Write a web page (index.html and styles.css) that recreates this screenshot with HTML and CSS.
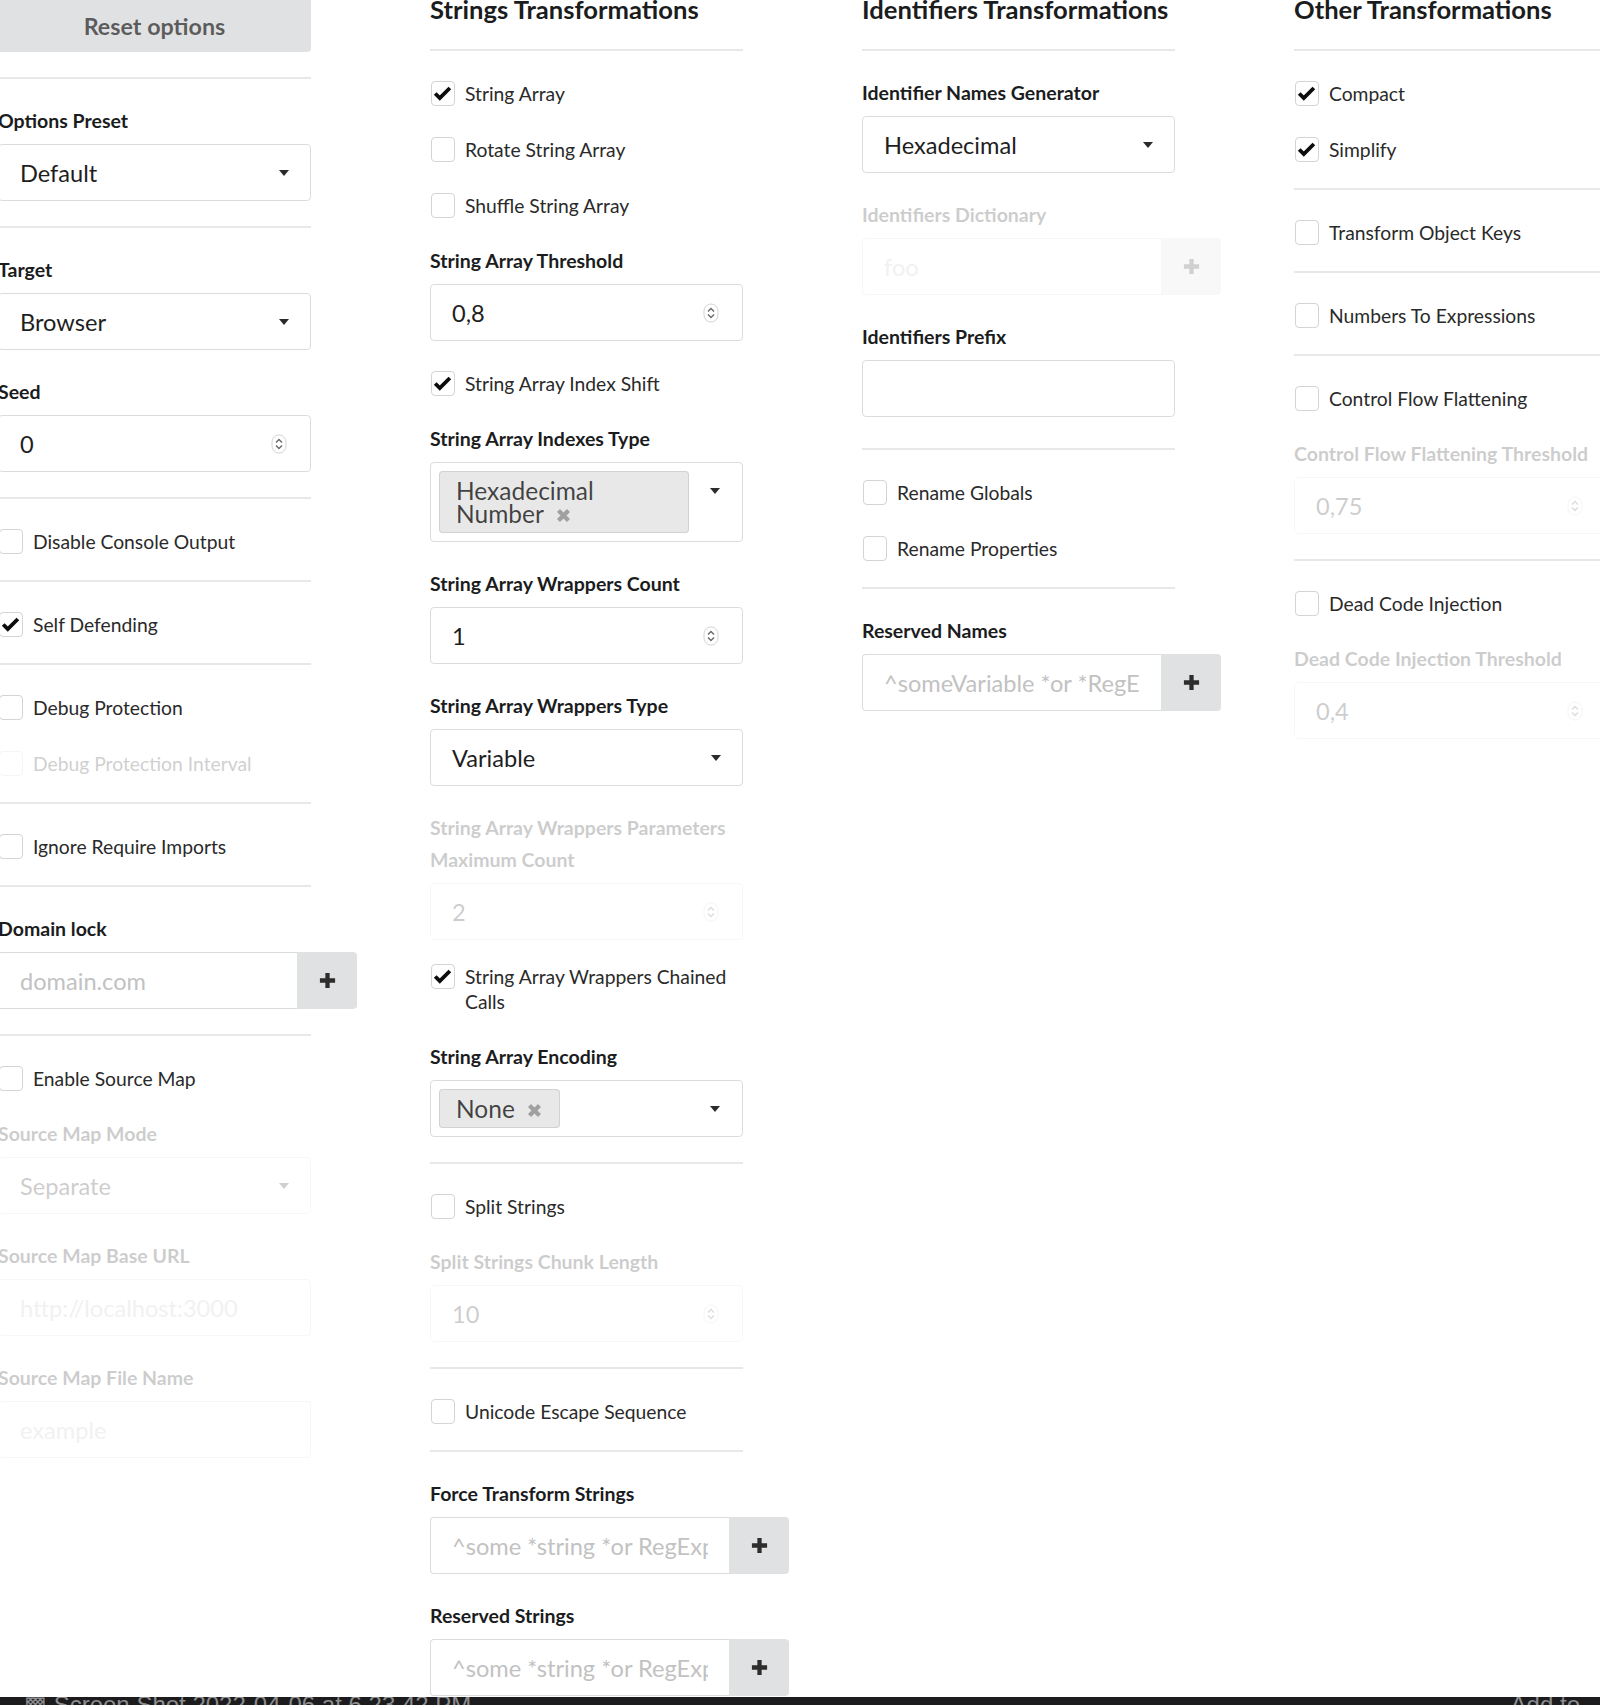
FILE: index.html
```html
<!DOCTYPE html>
<html lang="en">
<head>
    <meta charset="UTF-8">
    <meta name="viewport" content="width=device-width, initial-scale=1.0">
    <title>Obfuscator options</title>
    <link rel="stylesheet" href="styles.css">
</head>
<body>
    <div class="options">

        <!-- General -->
        <div class="options-column">
            <div class="segment">
                <button class="reset-button">Reset options</button>
            </div>
            <div class="segment">
                <div class="field">
                    <label class="field-label">Options Preset</label>
                    <div class="dropdown"><span>Default</span><i class="caret"></i></div>
                </div>
            </div>
            <div class="segment">
                <div class="field">
                    <label class="field-label">Target</label>
                    <div class="dropdown"><span>Browser</span><i class="caret"></i></div>
                </div>
                <div class="field">
                    <label class="field-label">Seed</label>
                    <div class="number-input">
                        <input type="text" value="0">
                        <svg class="spinner" viewBox="0 0 16 20"><rect x="1" y="1" width="14" height="18" rx="7"/><path d="M5 8.5l3-3 3 3M5 11.5l3 3 3-3"/></svg>
                    </div>
                </div>
            </div>
            <div class="segment">
                <label class="checkbox"><span class="box"></span>Disable Console Output</label>
            </div>
            <div class="segment">
                <label class="checkbox"><span class="box"><svg viewBox="0 0 24 24"><path d="M3.5 12l5 5L19.5 6"/></svg></span>Self Defending</label>
            </div>
            <div class="segment">
                <label class="checkbox"><span class="box"></span>Debug Protection</label>
                <label class="checkbox disabled"><span class="box"></span>Debug Protection Interval</label>
            </div>
            <div class="segment">
                <label class="checkbox"><span class="box"></span>Ignore Require Imports</label>
            </div>
            <div class="segment">
                <div class="field">
                    <label class="field-label">Domain lock</label>
                    <div class="action-input">
                        <input type="text" placeholder="domain.com">
                        <button class="add-button"><svg viewBox="0 0 20 20"><path d="M10 2v16M2 10h16"/></svg></button>
                    </div>
                </div>
            </div>
            <div class="segment">
                <label class="checkbox"><span class="box"></span>Enable Source Map</label>
                <div class="field disabled">
                    <label class="field-label">Source Map Mode</label>
                    <div class="dropdown"><span>Separate</span><i class="caret"></i></div>
                </div>
                <div class="field disabled">
                    <label class="field-label">Source Map Base URL</label>
                    <input class="text-input" type="text" placeholder="http://localhost:3000" disabled>
                </div>
                <div class="field disabled">
                    <label class="field-label">Source Map File Name</label>
                    <input class="text-input" type="text" placeholder="example" disabled>
                </div>
            </div>
        </div>

        <!-- Strings -->
        <div class="options-column">
            <div class="segment">
                <h3 class="column-title">Strings Transformations</h3>
            </div>
            <div class="segment">
                <label class="checkbox"><span class="box"><svg viewBox="0 0 24 24"><path d="M3.5 12l5 5L19.5 6"/></svg></span>String Array</label>
                <label class="checkbox"><span class="box"></span>Rotate String Array</label>
                <label class="checkbox"><span class="box"></span>Shuffle String Array</label>
                <div class="field">
                    <label class="field-label">String Array Threshold</label>
                    <div class="number-input">
                        <input type="text" value="0,8">
                        <svg class="spinner" viewBox="0 0 16 20"><rect x="1" y="1" width="14" height="18" rx="7"/><path d="M5 8.5l3-3 3 3M5 11.5l3 3 3-3"/></svg>
                    </div>
                </div>
                <label class="checkbox"><span class="box"><svg viewBox="0 0 24 24"><path d="M3.5 12l5 5L19.5 6"/></svg></span>String Array Index Shift</label>
                <div class="field">
                    <label class="field-label">String Array Indexes Type</label>
                    <div class="dropdown multiple">
                        <span class="tag">Hexadecimal Number<svg class="tag-delete" viewBox="0 0 12 12"><path d="M2 2l8 8M10 2l-8 8"/></svg></span>
                        <i class="caret"></i>
                    </div>
                </div>
                <div class="field">
                    <label class="field-label">String Array Wrappers Count</label>
                    <div class="number-input">
                        <input type="text" value="1">
                        <svg class="spinner" viewBox="0 0 16 20"><rect x="1" y="1" width="14" height="18" rx="7"/><path d="M5 8.5l3-3 3 3M5 11.5l3 3 3-3"/></svg>
                    </div>
                </div>
                <div class="field">
                    <label class="field-label">String Array Wrappers Type</label>
                    <div class="dropdown"><span>Variable</span><i class="caret"></i></div>
                </div>
                <div class="field disabled tight">
                    <label class="field-label">String Array Wrappers Parameters Maximum Count</label>
                    <div class="number-input">
                        <input type="text" value="2" disabled>
                        <svg class="spinner" viewBox="0 0 16 20"><rect x="1" y="1" width="14" height="18" rx="7"/><path d="M5 8.5l3-3 3 3M5 11.5l3 3 3-3"/></svg>
                    </div>
                </div>
                <label class="checkbox"><span class="box"><svg viewBox="0 0 24 24"><path d="M3.5 12l5 5L19.5 6"/></svg></span>String Array Wrappers Chained Calls</label>
                <div class="field">
                    <label class="field-label">String Array Encoding</label>
                    <div class="dropdown multiple">
                        <span class="tag">None<svg class="tag-delete" viewBox="0 0 12 12"><path d="M2 2l8 8M10 2l-8 8"/></svg></span>
                        <i class="caret"></i>
                    </div>
                </div>
            </div>
            <div class="segment">
                <label class="checkbox"><span class="box"></span>Split Strings</label>
                <div class="field disabled">
                    <label class="field-label">Split Strings Chunk Length</label>
                    <div class="number-input">
                        <input type="text" value="10" disabled>
                        <svg class="spinner" viewBox="0 0 16 20"><rect x="1" y="1" width="14" height="18" rx="7"/><path d="M5 8.5l3-3 3 3M5 11.5l3 3 3-3"/></svg>
                    </div>
                </div>
            </div>
            <div class="segment">
                <label class="checkbox"><span class="box"></span>Unicode Escape Sequence</label>
            </div>
            <div class="segment">
                <div class="field">
                    <label class="field-label">Force Transform Strings</label>
                    <div class="action-input">
                        <input type="text" placeholder="^some *string *or RegExp">
                        <button class="add-button"><svg viewBox="0 0 20 20"><path d="M10 2v16M2 10h16"/></svg></button>
                    </div>
                </div>
                <div class="field">
                    <label class="field-label">Reserved Strings</label>
                    <div class="action-input">
                        <input type="text" placeholder="^some *string *or RegExp">
                        <button class="add-button"><svg viewBox="0 0 20 20"><path d="M10 2v16M2 10h16"/></svg></button>
                    </div>
                </div>
            </div>
        </div>

        <!-- Identifiers -->
        <div class="options-column">
            <div class="segment">
                <h3 class="column-title">Identifiers Transformations</h3>
            </div>
            <div class="segment">
                <div class="field">
                    <label class="field-label">Identifier Names Generator</label>
                    <div class="dropdown"><span>Hexadecimal</span><i class="caret"></i></div>
                </div>
                <div class="field disabled">
                    <label class="field-label">Identifiers Dictionary</label>
                    <div class="action-input">
                        <input type="text" placeholder="foo" disabled>
                        <button class="add-button" disabled><svg viewBox="0 0 20 20"><path d="M10 2v16M2 10h16"/></svg></button>
                    </div>
                </div>
                <div class="field prefix-field">
                    <label class="field-label">Identifiers Prefix</label>
                    <input class="text-input" type="text">
                </div>
            </div>
            <div class="segment">
                <label class="checkbox"><span class="box"></span>Rename Globals</label>
                <label class="checkbox"><span class="box"></span>Rename Properties</label>
            </div>
            <div class="segment">
                <div class="field">
                    <label class="field-label">Reserved Names</label>
                    <div class="action-input">
                        <input type="text" placeholder="^someVariable *or *RegExp">
                        <button class="add-button"><svg viewBox="0 0 20 20"><path d="M10 2v16M2 10h16"/></svg></button>
                    </div>
                </div>
            </div>
        </div>

        <!-- Other -->
        <div class="options-column">
            <div class="segment">
                <h3 class="column-title">Other Transformations</h3>
            </div>
            <div class="segment">
                <label class="checkbox"><span class="box"><svg viewBox="0 0 24 24"><path d="M3.5 12l5 5L19.5 6"/></svg></span>Compact</label>
                <label class="checkbox"><span class="box"><svg viewBox="0 0 24 24"><path d="M3.5 12l5 5L19.5 6"/></svg></span>Simplify</label>
            </div>
            <div class="segment">
                <label class="checkbox"><span class="box"></span>Transform Object Keys</label>
            </div>
            <div class="segment">
                <label class="checkbox"><span class="box"></span>Numbers To Expressions</label>
            </div>
            <div class="segment">
                <label class="checkbox"><span class="box"></span>Control Flow Flattening</label>
                <div class="field disabled">
                    <label class="field-label">Control Flow Flattening Threshold</label>
                    <div class="number-input">
                        <input type="text" value="0,75" disabled>
                        <svg class="spinner" viewBox="0 0 16 20"><rect x="1" y="1" width="14" height="18" rx="7"/><path d="M5 8.5l3-3 3 3M5 11.5l3 3 3-3"/></svg>
                    </div>
                </div>
            </div>
            <div class="segment">
                <label class="checkbox"><span class="box"></span>Dead Code Injection</label>
                <div class="field disabled">
                    <label class="field-label">Dead Code Injection Threshold</label>
                    <div class="number-input">
                        <input type="text" value="0,4" disabled>
                        <svg class="spinner" viewBox="0 0 16 20"><rect x="1" y="1" width="14" height="18" rx="7"/><path d="M5 8.5l3-3 3 3M5 11.5l3 3 3-3"/></svg>
                    </div>
                </div>
            </div>
        </div>
    </div>

    <div class="screenshot-bar">
        <span class="bar-title">&#9641; Screen Shot 2022-04-06 at 6.23.42 PM</span>
        <span class="bar-title">Add to</span>
    </div>
</body>
</html>
```

FILE: styles.css
```css
* {
    box-sizing: border-box;
}

html,
body {
    margin: 0;
    height: 1705px;
    overflow: hidden;
    background: #fff;
}

body {
    font-family: Lato, "Noto Sans", sans-serif;
    color: #1b1c1d;
}

.options {
    display: grid;
    grid-template-columns: repeat(4, 313px);
    column-gap: 119px;
    align-items: start;
    margin-left: -2px;
}

.options-column {
    display: flex;
    flex-direction: column;
}

.segment {
    display: flex;
    flex-direction: column;
    gap: 26px;
    padding: 26px 0 25px;
    border-bottom: 2px solid #e8e8e9;
}

.segment:first-child {
    padding-top: 0;
}

.segment:last-child {
    border-bottom: none;
}

.column-title {
    margin: -5px 0 0;
    font-size: 25.6px;
    line-height: 29px;
    font-weight: 700;
    color: #1b1c1d;
}

.reset-button {
    height: 52px;
    border: none;
    border-radius: 0 0 4px 4px;
    background: #e0e1e2;
    color: rgba(0, 0, 0, .6);
    font-family: Lato, sans-serif;
    font-size: 23.3px;
    font-weight: 700;
}

/* fields */
.field-label {
    display: block;
    margin-bottom: 7px;
    font-size: 19.5px;
    line-height: 32px;
    font-weight: 700;
    color: #1b1c1d;
}

.field.disabled,
.checkbox.disabled {
    opacity: .22;
}

.field.tight {
    margin-bottom: -6px;
}

.prefix-field {
    margin-bottom: 6px;
}

.dropdown,
.number-input,
.text-input {
    display: flex;
    align-items: center;
    width: 100%;
    height: 57px;
    border: 1px solid #dcdcdd;
    border-radius: 4px;
    background: #fff;
    font-size: 23.6px;
    color: #1e1e1e;
}

.dropdown {
    justify-content: space-between;
    padding: 0 21px 0 21px;
}

.caret {
    flex: none;
    width: 0;
    height: 0;
    border-left: 5px solid transparent;
    border-right: 5px solid transparent;
    border-top: 6px solid #2b2b2b;
}

.dropdown.multiple {
    height: auto;
    min-height: 57px;
    padding: 8px 22px 8px 8px;
}

.dropdown.multiple .caret {
    align-self: flex-start;
    margin-top: 17px;
}

.tag {
    max-width: 250px;
    padding: 8px 18px 8px 17px;
    border-radius: 4px;
    background: #e8e8e8;
    box-shadow: inset 0 0 0 1px #d2d2d3;
    font-size: 24.5px;
    line-height: 23px;
    color: rgba(0, 0, 0, .72);
}

.tag-delete {
    width: 15px;
    height: 15px;
    margin-left: 12px;
    fill: none;
    stroke: #a0a0a0;
    stroke-width: 3.4;
}

.number-input input,
.text-input,
.action-input input {
    font-family: Lato, sans-serif;
    font-size: 23.6px;
    color: #1e1e1e;
    outline: none;
}

.number-input {
    padding: 0 23px 0 0;
}

.number-input input {
    flex: 1;
    min-width: 0;
    height: 100%;
    padding: 0 0 0 21px;
    border: none;
    background: transparent;
}

.text-input {
    padding: 0 21px;
}

.spinner {
    flex: none;
    width: 16px;
    height: 20px;
    fill: none;
}

.spinner rect {
    stroke: #d3d3d3;
}

.spinner path {
    stroke: #6d6d6d;
    stroke-width: 1.5;
}

input::placeholder {
    color: #c2c2c2;
}

input:disabled {
    background: #fff;
}

/* input with "+" button */
.action-input {
    display: flex;
    width: 359px;
    height: 57px;
}

.action-input input {
    flex: 1;
    min-width: 0;
    padding: 0 21px;
    border: 1px solid #dcdcdd;
    border-right: none;
    border-radius: 4px 0 0 4px;
}

.add-button {
    flex: none;
    width: 60px;
    border: none;
    border-radius: 0 4px 4px 0;
    background: #e0e1e2;
    display: flex;
    align-items: center;
    justify-content: center;
}

.add-button svg {
    width: 19px;
    height: 19px;
    stroke: #2d2d2d;
    stroke-width: 4.5;
}

/* checkboxes */
.checkbox {
    display: flex;
    align-items: flex-start;
    gap: 10px;
    padding: 4px 0 1px;
    font-size: 19.3px;
    line-height: 25px;
    color: #2a2a2a;
}

.checkbox .box {
    flex: none;
    width: 24px;
    height: 25px;
    margin-left: 1px;
    border: 1px solid #d4d4d5;
    border-radius: 4px;
    background: #fff;
}

.checkbox .box svg {
    display: block;
    width: 22px;
    height: 23px;
    fill: none;
    stroke: #0c0c0c;
    stroke-width: 4.2;
}

/* bottom edge of the captured screen */
.screenshot-bar {
    position: fixed;
    left: 0;
    right: 0;
    bottom: 0;
    height: 8px;
    display: flex;
    justify-content: space-between;
    padding: 0 20px 0 24px;
    overflow: hidden;
    background: #1c1c1e;
}

.bar-title {
    margin-top: -7px;
    font-family: "Liberation Sans", sans-serif;
    font-size: 24px;
    line-height: 30px;
    color: #8d8d8f;
    white-space: nowrap;
}
```
